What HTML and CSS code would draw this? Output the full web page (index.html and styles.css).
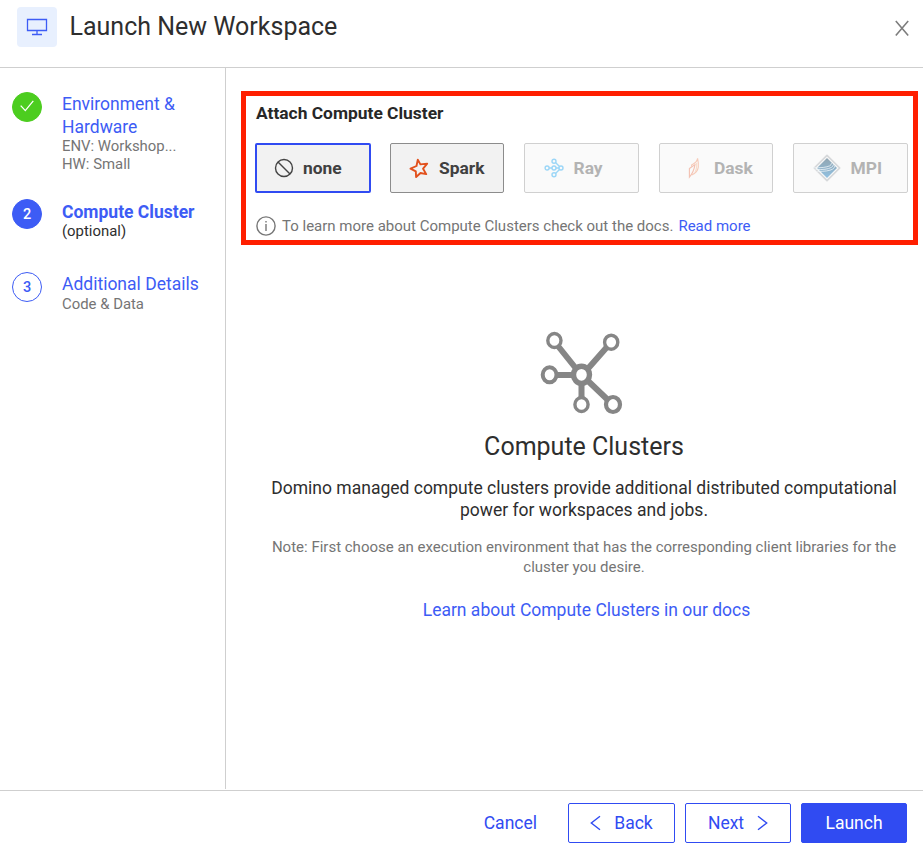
FILE: index.html
```html
<!DOCTYPE html>
<html lang="en">
<head>
<meta charset="utf-8">
<title>Launch New Workspace</title>
<link rel="stylesheet" href="styles.css">
</head>
<body>
<div class="modal">
  <header class="header">
    <div class="header-icon">
      <svg width="22" height="20" viewBox="0 0 22 20" fill="none" stroke="#3d5cf5" stroke-width="1.3"><path d="M1.5 2.5h19v11h-19zM11 13.5v4M6 17.5h10"/></svg>
    </div>
    <h1 class="title"><span>Launch New Workspace</span></h1>
    <svg class="close" width="16" height="18" viewBox="0 0 16 18" fill="none" stroke="#7d7d7d" stroke-width="1.6"><path d="M1.8 2l12.4 14.5M14.2 2L1.8 16.5"/></svg>
  </header>
  <div class="body">
    <nav class="steps">
      <div class="step step-env">
        <div class="dot done"><svg width="14" height="12" viewBox="0 0 14 12" fill="none" stroke="#fff" stroke-width="1.3"><path d="M.7 5.6l4.6 5L13.3.8"/></svg></div>
        <div class="step-text">
          <div class="step-title"><span>Environment &amp;</span><br><span>Hardware</span></div>
          <div class="step-sub env"><span>ENV: Workshop...</span><br><span>HW: Small</span></div>
        </div>
      </div>
      <div class="step step-cluster">
        <div class="dot current">2</div>
        <div class="step-text">
          <div class="step-title active"><span>Compute Cluster</span></div>
          <div class="step-sub dark"><span>(optional)</span></div>
        </div>
      </div>
      <div class="step">
        <div class="dot">3</div>
        <div class="step-text">
          <div class="step-title"><span>Additional Details</span></div>
          <div class="step-sub"><span>Code &amp; Data</span></div>
        </div>
      </div>
    </nav>
    <main class="content">
      <section class="attach">
        <h2 class="attach-title"><span>Attach Compute Cluster</span></h2>
        <div class="options">
          <button class="option selected">
            <svg width="20" height="20" viewBox="0 0 20 20" fill="none" stroke="#444" stroke-width="1.4"><circle cx="10" cy="10" r="8.5"/><path d="M4 4l12 12"/></svg>
            <span>none</span>
          </button>
          <button class="option spark">
            <svg width="20" height="20" viewBox="0 0 20 20" fill="none" stroke="#e2511d" stroke-width="1.9" stroke-linejoin="round"><path d="M8.8 1.6l2.6 4.8 6.8-.8-4.1 5.1 3.1 5.4-5.7-1.1-4.4 4-.3-5.7-5.3-2.7 6-2.6z"/></svg>
            <span>Spark</span>
          </button>
          <button class="option ray disabled">
            <svg width="20" height="20" viewBox="0 0 20 20" fill="none" stroke="#9bd6f7" stroke-width="1.4"><circle cx="3.1" cy="10" r="2"/><circle cx="10" cy="10" r="2"/><circle cx="17" cy="10" r="2"/><circle cx="10" cy="3.2" r="2"/><circle cx="10" cy="16.8" r="2"/><path d="M5.1 10H8M12 10h3M11.5 4.6l4 4M11.5 15.4l4-4"/></svg>
            <span>Ray</span>
          </button>
          <button class="option dask disabled">
            <svg width="12" height="22" viewBox="0 0 12 22" fill="none" stroke-width="1.1"><path stroke="#f3c1b2" d="M1.4 11.5L7 7.6Q5.8 15 1.4 20.2z"/><path stroke="#f6cbb9" d="M3.6 9.8V7.9Q9 5.5 9.6 1.4q1.1 5.2.7 8.8Q9.5 15.8 3.8 18"/><path stroke="#f8ddcb" d="M7 14.9Q9 12.3 8.6 6"/></svg>
            <span>Dask</span>
          </button>
          <button class="option mpi disabled">
            <svg width="28" height="28" viewBox="0 0 28 28" fill="none"><defs><linearGradient id="mpi-fill" x1="0" y1="0" x2="0" y2="1"><stop offset="0" stop-color="#91a5b1"/><stop offset="1" stop-color="#91c1e2"/></linearGradient></defs><path d="M14 1.3L26.7 14 14 26.7 1.3 14z" fill="#fafafa" stroke="#d6d8da" stroke-width="1.7" stroke-linejoin="round"/><path d="M14 4l10 10-10 10L4 14z" fill="url(#mpi-fill)"/><path d="M0 13.8q12 .3 16.8-2 1.6-.9 1.7-2.6M2.6 15.5q11 .5 15.6-2 2.2-1.2 2.3-3.1M4.2 17.3q11 .4 15.4-2.2 2.1-1.3 2.4-3.3" stroke="#edf4f8" stroke-width=".8"/></svg>
            <span>MPI</span>
          </button>
        </div>
        <div class="info">
          <svg width="20" height="20" viewBox="0 0 20 20" fill="none" stroke="#777" stroke-width="1.4"><circle cx="10" cy="10" r="9.1"/><path d="M10 8v7M10 5v1.6"/></svg>
          <span class="info-text">To learn more about Compute Clusters check out the docs.</span>
          <a class="info-link">Read more</a>
        </div>
      </section>
      <section class="empty">
        <svg class="network" width="84" height="86" viewBox="540 330 84 86" fill="none" stroke="#868686"><path stroke-width="6" d="M558 346l20 25M607 347l-22 25M555 375h21M581.5 379v19M586 379l23 22"/><g fill="#fff"><ellipse cx="554.4" cy="340.5" rx="6.6" ry="7" stroke-width="3.4"/><ellipse cx="611.2" cy="342.2" rx="6.6" ry="7" stroke-width="3.4"/><ellipse cx="549.6" cy="374.8" rx="6.9" ry="7.5" stroke-width="4"/><ellipse cx="581.5" cy="374.8" rx="8" ry="8.6" stroke-width="5.4"/><ellipse cx="581.5" cy="404.5" rx="6.6" ry="7" stroke-width="3.4"/><ellipse cx="613" cy="404.5" rx="7" ry="7.5" stroke-width="4.2"/></g></svg>
        <h2 class="empty-title"><span>Compute Clusters</span></h2>
        <p class="empty-text"><span>Domino managed compute clusters provide additional distributed computational</span><br><span>power for workspaces and jobs.</span></p>
        <p class="empty-note"><span>Note: First choose an execution environment that has the corresponding client libraries for the</span><br><span>cluster you desire.</span></p>
        <a class="empty-link"><span>Learn about Compute Clusters in our docs</span></a>
      </section>
    </main>
  </div>
  <footer class="footer">
    <a class="cancel"><span>Cancel</span></a>
    <button class="btn back"><svg width="11" height="16" viewBox="0 0 11 16" fill="none" stroke="#304bf2" stroke-width="1.4"><path d="M10 1.2L1.3 8l8.7 6.8"/></svg><span>Back</span></button>
    <button class="btn next"><span>Next</span><svg width="11" height="16" viewBox="0 0 11 16" fill="none" stroke="#304bf2" stroke-width="1.4"><path d="M1 1.2L9.7 8 1 14.8"/></svg></button>
    <button class="btn primary"><span>Launch</span></button>
  </footer>
</div>
</body>
</html>
```
FILE: styles.css
```css
* { box-sizing: border-box; }
body { margin: 0; font-family: Roboto, "Liberation Sans", sans-serif; color: #2e2e2e; background: #fff; }
h1, h2, p { margin: 0; font-weight: 400; }
button { font: inherit; margin: 0; }
svg { display: block; flex: none; }
.modal { width: 923px; height: 850px; display: flex; flex-direction: column; overflow: hidden; }
.header { height: 68px; flex: none; display: flex; align-items: flex-start; padding: 7px 13px 0 17px; border-bottom: 1px solid #cfcfcf; }
.header-icon { width: 40px; height: 40px; border-radius: 4px; background: #e8f0fe; display: flex; align-items: center; justify-content: center; }
.title { flex: 1; margin-left: 12.5px; font-size: 25px; line-height: 40px; }
.close { margin-top: 12px; }
.body { flex: 1; display: flex; min-height: 0; }
.steps { width: 226px; flex: none; border-right: 1px solid #cfcfcf; margin-bottom: 1px; padding: 24px 0 0 12px; }
.step { display: flex; gap: 20px; }
.step-env { height: 107px; }
.step-cluster { height: 73px; }
.dot { width: 30px; height: 30px; flex: none; border-radius: 50%; border: 1px solid #3d5cf5; color: #3d5cf5; font-size: 14.5px; font-weight: 500; display: flex; align-items: center; justify-content: center; }
.dot.done { background: #4ccd1f; border-color: #4ccd1f; }
.dot.done svg { margin-top: -3px; }
.dot.current { background: #3d5cf5; color: #fff; }
.step-title { font-size: 17.5px; line-height: 23px; margin-top: 1px; color: #3d5cf5; white-space: nowrap; }
.step-title.active { font-weight: 700; margin-top: 2px; }
.step-sub { font-size: 14.9px; line-height: 18px; margin-top: -1px; color: #757575; white-space: nowrap; }
.step-sub.env { margin-top: -2px; }
.step-sub.dark { color: #2e2e2e; line-height: 16px; }
.content { flex: 1; padding: 23px 5px 0 15px; }
.attach { height: 154px; border: 5px solid #ff1f00; padding: 8px 5px 0 9px; }
.attach-title { font-size: 17.4px; line-height: 18px; font-weight: 700; color: #272727; padding-left: 1px; }
.options { display: grid; grid-template-columns: 115px 114px 115px 114px 115px; column-gap: 20px; margin-top: 21px; }
.option { height: 50px; padding: 0 0 0 18px; border: 1px solid #8c8c8c; border-radius: 2px; background: #f2f2f2; display: flex; align-items: center; gap: 10px; font-size: 17.4px; font-weight: 700; color: #404040; }
.option.selected { width: 116px; border: 2px solid #304bf2; padding-left: 17px; gap: 9px; }
.option.disabled { background: #fafafa; border-color: #d0d0d0; color: #b3b3b3; }
.option.ray { padding-left: 19px; }
.option.ray, .option.mpi { gap: 9.5px; }
.option.dask { padding-left: 28px; gap: 14px; }
.option.mpi { padding-left: 19px; }
.info { display: flex; align-items: center; margin-top: 23px; height: 20px; font-size: 15px; color: #757575; padding-left: 1px; white-space: nowrap; }
.info-text { margin-left: 6px; }
.info-link { margin-left: 5px; color: #3d5cf5; }
.empty { display: flex; flex-direction: column; align-items: center; text-align: center; padding: 85px 0 0 9px; white-space: nowrap; }
.network { margin-left: -4px; }
.empty-title { font-size: 25px; line-height: 30px; margin-top: 16px; }
.empty-text { font-size: 17.5px; line-height: 22px; margin-top: 15px; }
.empty-note { font-size: 15px; line-height: 20px; color: #757575; margin-top: 16px; }
.empty-link { font-size: 17.5px; line-height: 22px; margin: 22px 0 0 5px; color: #3d5cf5; }
.footer { height: 60px; flex: none; border-top: 1px solid #cfcfcf; display: flex; justify-content: flex-end; padding: 12px 16px 0 0; font-size: 17.5px; color: #304bf2; }
.cancel { line-height: 40px; margin-right: 31px; }
.btn { width: 106px; height: 40px; padding: 0; border: 1px solid #304bf2; border-radius: 2px; background: #fff; color: #304bf2; display: flex; align-items: center; justify-content: center; gap: 13px; margin-left: 10px; }
.btn.back { width: 107px; margin-left: 0; }
.btn.primary { background: #304bf2; color: #fff; }
```
